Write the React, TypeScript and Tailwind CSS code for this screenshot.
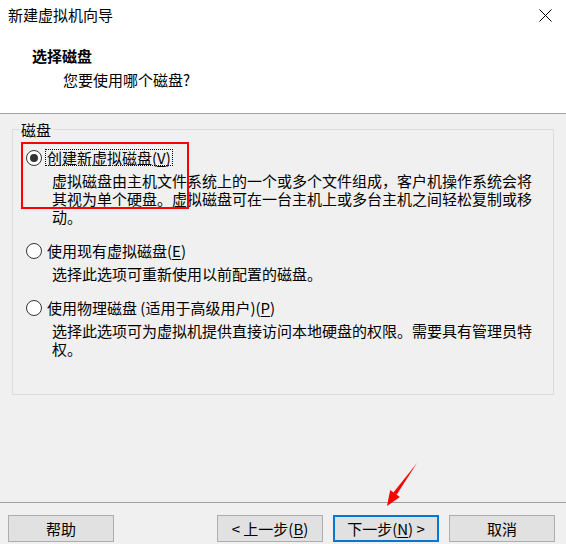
import React from 'react';

const font = "font-['Microsoft_YaHei','Noto_Sans_CJK_SC',sans-serif]";

function Radio({ checked }: { checked?: boolean }) {
    return (
        <span className="w-[16px] h-[16px] rounded-full border border-[#333] bg-white flex items-center justify-center shrink-0">
            {checked && <span className="w-[8px] h-[8px] rounded-full bg-[#333]" />}
        </span>
    );
}

function Option({ checked, label, hotkey, suffix, focused, desc }: any) {
    return (
        <div className="flex flex-col">
            <div className="flex items-center h-[19px] pl-[13px] gap-[3px]">
                <Radio checked={checked} />
                <span className={`leading-[15px] px-[1px] border ${focused ? 'border-dotted border-black' : 'border-transparent'}`}>
                    {label}(<span className="underline underline-offset-2">{hotkey}</span>){suffix}
                </span>
            </div>
            <p className="mt-[5px] pl-[39px] w-[524px] leading-[18px]">{desc}</p>
        </div>
    );
}

function Btn({ children, primary }: any) {
    return (
        <button className={`w-[106px] h-[27px] bg-[#e1e1e1] flex items-center justify-center leading-none ${primary ? 'border-2 border-[#0078d7]' : 'border border-[#adadad]'}`}>
            {children}
        </button>
    );
}

export default function App() {
    return (
        <div className={`relative w-[566px] h-[544px] bg-[#f0f0f0] text-black text-[15px] flex flex-col overflow-hidden ${font}`}>
            {/* Header */}
            <div className="h-[114px] bg-white border-b border-[#a0a0a0] flex flex-col">
                <div className="h-[31px] flex items-center justify-between pl-[8px] pr-[14px]">
                    <span>新建虚拟机向导</span>
                    <svg width="13" height="13" viewBox="0 0 13 13">
                        <path d="M0.5 0.5 L12.5 12.5 M12.5 0.5 L0.5 12.5" stroke="#000" strokeWidth="1" />
                    </svg>
                </div>
                <div className="mt-[15px] pl-[32px] leading-[19px] font-bold">选择磁盘</div>
                <div className="mt-[5px] pl-[63px] leading-[19px]">您要使用哪个磁盘?</div>
            </div>

            {/* Body */}
            <div className="flex-1">
                <fieldset className="mt-[6px] mx-[12px] h-[275px] border border-[#dcdcdc]">
                    <legend className="ml-[6px] px-[2px] leading-[19px]">磁盘</legend>
                    <div className="mt-[9px] flex flex-col gap-[15px]">
                        <Option
                            checked
                            focused
                            label="创建新虚拟磁盘"
                            hotkey="V"
                            desc="虚拟磁盘由主机文件系统上的一个或多个文件组成，客户机操作系统会将其视为单个硬盘。虚拟磁盘可在一台主机上或多台主机之间轻松复制或移动。"
                        />
                        <Option
                            label="使用现有虚拟磁盘"
                            hotkey="E"
                            desc="选择此选项可重新使用以前配置的磁盘。"
                        />
                        <Option
                            label="使用物理磁盘 (适用于高级用户)"
                            hotkey="P"
                            desc="选择此选项可为虚拟机提供直接访问本地硬盘的权限。需要具有管理员特权。"
                        />
                    </div>
                </fieldset>
            </div>

            {/* Footer */}
            <div className="h-[42px] border-t border-[#a0a0a0] flex items-start pt-[12px] pl-[8px] pr-[11px]">
                <Btn>帮助</Btn>
                <div className="ml-auto flex gap-[10px]">
                    <Btn>&lt; 上一步(<span className="underline underline-offset-2">B</span>)</Btn>
                    <Btn primary>下一步(<span className="underline underline-offset-2">N</span>) &gt;</Btn>
                    <Btn>取消</Btn>
                </div>
            </div>

            {/* Annotations */}
            <div className="absolute left-[21px] top-[142px] w-[168px] h-[67px] border-2 border-[#f00] pointer-events-none" />
            <svg className="absolute left-0 top-0 pointer-events-none" width="566" height="544">
                <polygon points="417,463 396.6,494.8 393.4,492.4" fill="#f00" />
                <polygon points="387,506 390.2,490.1 399.9,497.1" fill="#f00" />
            </svg>
        </div>
    );
}
